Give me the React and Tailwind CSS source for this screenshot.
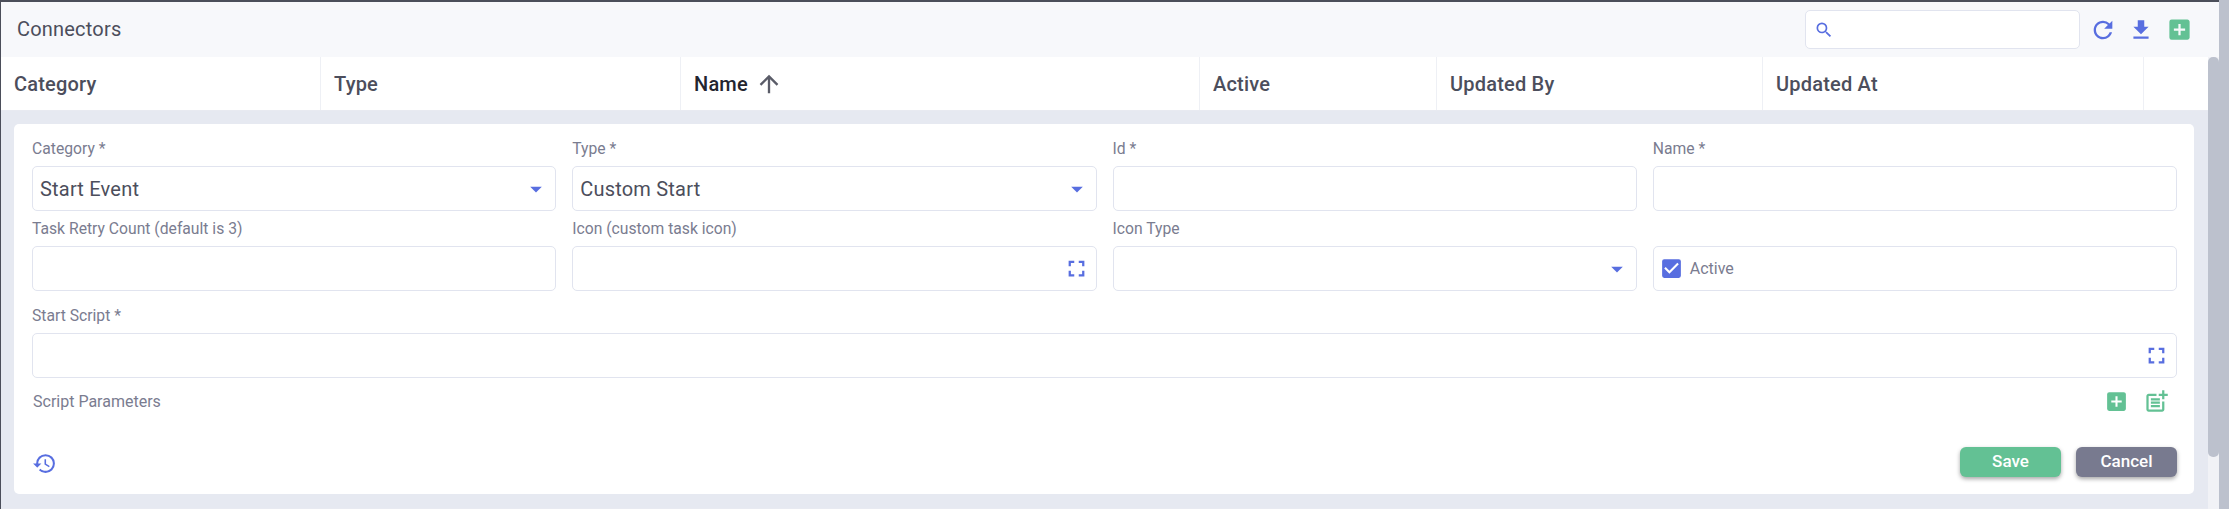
import React from "react";
import {
  MdAddBox,
  MdArrowDropDown,
  MdArrowUpward,
  MdCheckBox,
  MdFileDownload,
  MdFullscreen,
  MdHistory,
  MdOutlinePostAdd,
  MdRefresh,
  MdSearch,
} from "react-icons/md";

const columns = [
  { label: "Category", width: "w-[320px]" },
  { label: "Type", width: "w-[360px]" },
  { label: "Name", width: "w-[519px]", sorted: true },
  { label: "Active", width: "w-[237px]" },
  { label: "Updated By", width: "w-[326px]" },
  { label: "Updated At", width: "w-[381px]" },
];

function Field({ label, children }) {
  return (
    <div className="min-w-0">
      <div className="h-[35px] flex items-center pt-px text-[15.7px] text-[#7a7c90]">{label}</div>
      {children}
    </div>
  );
}

function Box({ children }) {
  return (
    <div className="h-[45px] flex items-center justify-between rounded-[5px] border border-[#e1e4ef] bg-white pl-[7px] pr-[11px]">
      {children}
    </div>
  );
}

function Select({ label, value }) {
  return (
    <Field label={label}>
      <Box>
        <span className="text-[20px] tracking-[0.2px] text-[#4c4e5c]">{value}</span>
        <MdArrowDropDown size={28} className="text-[#586ee0] -mr-[6px]" />
      </Box>
    </Field>
  );
}

function TextInput({ label, expand }) {
  return (
    <Field label={label}>
      <Box>
        <span />
        {expand && <MdFullscreen size={27} className="text-[#586ee0] -mr-[5px]" />}
      </Box>
    </Field>
  );
}

export default function App() {
  return (
    <div className="h-[509px] w-full flex overflow-hidden bg-white font-['Roboto',sans-serif]">
      <div className="flex-1 min-w-0 flex flex-col border-t-2 border-l border-[#4b4e5a]">
        {/* toolbar */}
        <div className="h-[55px] shrink-0 flex items-center justify-between bg-[#f7f8fb] pl-[16px] pr-[26px]">
          <h1 className="pb-[2px] text-[20px] tracking-[0.2px] text-[#4c4e5c]">Connectors</h1>
          <div className="flex items-center">
            <div className="w-[275px] h-[39px] flex items-center rounded-[5px] border border-[#e1e4ef] bg-white pl-[8px]">
              <MdSearch size={20} className="text-[#586ee0]" />
            </div>
            <MdRefresh size={28} className="ml-[9px] text-[#586ee0]" />
            <MdFileDownload size={26} className="ml-[11px] text-[#586ee0]" />
            <MdAddBox size={27} className="ml-[12px] text-[#63c194]" />
          </div>
        </div>

        <div className="flex-1 min-h-0 flex">
          <div className="flex-1 min-w-0 flex flex-col">
            {/* table header */}
            <div className="h-[54px] shrink-0 flex border-b border-[#e8eaf1] bg-white">
              {columns.map((col) => (
                <div
                  key={col.label}
                  className={`${col.width} shrink-0 flex items-center gap-[7px] border-r border-[#eef0f5] pl-[13px]`}
                >
                  <span className={`text-[20px] tracking-[0.2px] font-medium ${col.sorted ? "text-[#23252f]" : "text-[#4c4e5c]"}`}>
                    {col.label}
                  </span>
                  {col.sorted && <MdArrowUpward size={28} className="text-[#5a5c68]" />}
                </div>
              ))}
            </div>

            {/* detail form */}
            <div className="h-[397px] shrink-0 bg-[#e6e9f1] pt-[13px] pl-[13px] pr-[14px]">
              <div className="h-[370px] rounded-[5px] bg-white pt-[7px] pl-[18px] pr-[17px]">
                <div className="grid grid-cols-4 gap-x-[16px]">
                  <Select label="Category *" value="Start Event" />
                  <Select label="Type *" value="Custom Start" />
                  <TextInput label="Id *" />
                  <TextInput label="Name *" />
                  <TextInput label="Task Retry Count (default is 3)" />
                  <TextInput label="Icon (custom task icon)" expand />
                  <Select label="Icon Type" value="" />
                  <Field label="">
                    <div className="h-[45px] flex items-center gap-[6px] rounded-[5px] border border-[#e1e4ef] bg-white pl-[5px]">
                      <MdCheckBox size={25} className="text-[#586ee0]" />
                      <span className="text-[16px] text-[#7a7c90]">Active</span>
                    </div>
                  </Field>
                </div>

                <div className="mt-[7px]">
                  <TextInput label="Start Script *" expand />
                </div>

                <div className="mt-[10px] flex items-center justify-between pl-px pr-[7px]">
                  <span className="text-[16px] text-[#7a7c90]">Script Parameters</span>
                  <div className="flex items-center gap-[14px]">
                    <MdAddBox size={25} className="text-[#63c194]" />
                    <MdOutlinePostAdd size={27} className="text-[#63c194]" />
                  </div>
                </div>

                <div className="mt-[32px] flex items-center justify-between">
                  <MdHistory size={25} className="mt-[2px] text-[#586ee0]" />
                  <div className="flex gap-[15px]">
                    <button className="w-[101px] h-[30px] rounded-[6px] bg-[#63c194] text-[17px] font-medium text-white shadow-[0_2px_4px_rgba(0,0,0,0.35)]">
                      Save
                    </button>
                    <button className="w-[101px] h-[30px] rounded-[6px] bg-[#787a8f] text-[17px] font-medium text-white shadow-[0_2px_4px_rgba(0,0,0,0.35)]">
                      Cancel
                    </button>
                  </div>
                </div>
              </div>
            </div>

            {/* next table row, cut off by the window */}
            <div className="flex-1 flex border-t border-[#e8eaf1]">
              <div className="w-[320px] border-r border-[#eef0f5]" />
            </div>
          </div>

          {/* table scrollbar */}
          <div className="w-[11px] shrink-0 bg-[#f1f2f6]">
            <div className="h-[400px] rounded-[5px] bg-[#bcc1cd]" />
          </div>
        </div>
      </div>

      {/* page scrollbar */}
      <div className="w-[10px] shrink-0 bg-[#bcc1cd]" />
    </div>
  );
}
